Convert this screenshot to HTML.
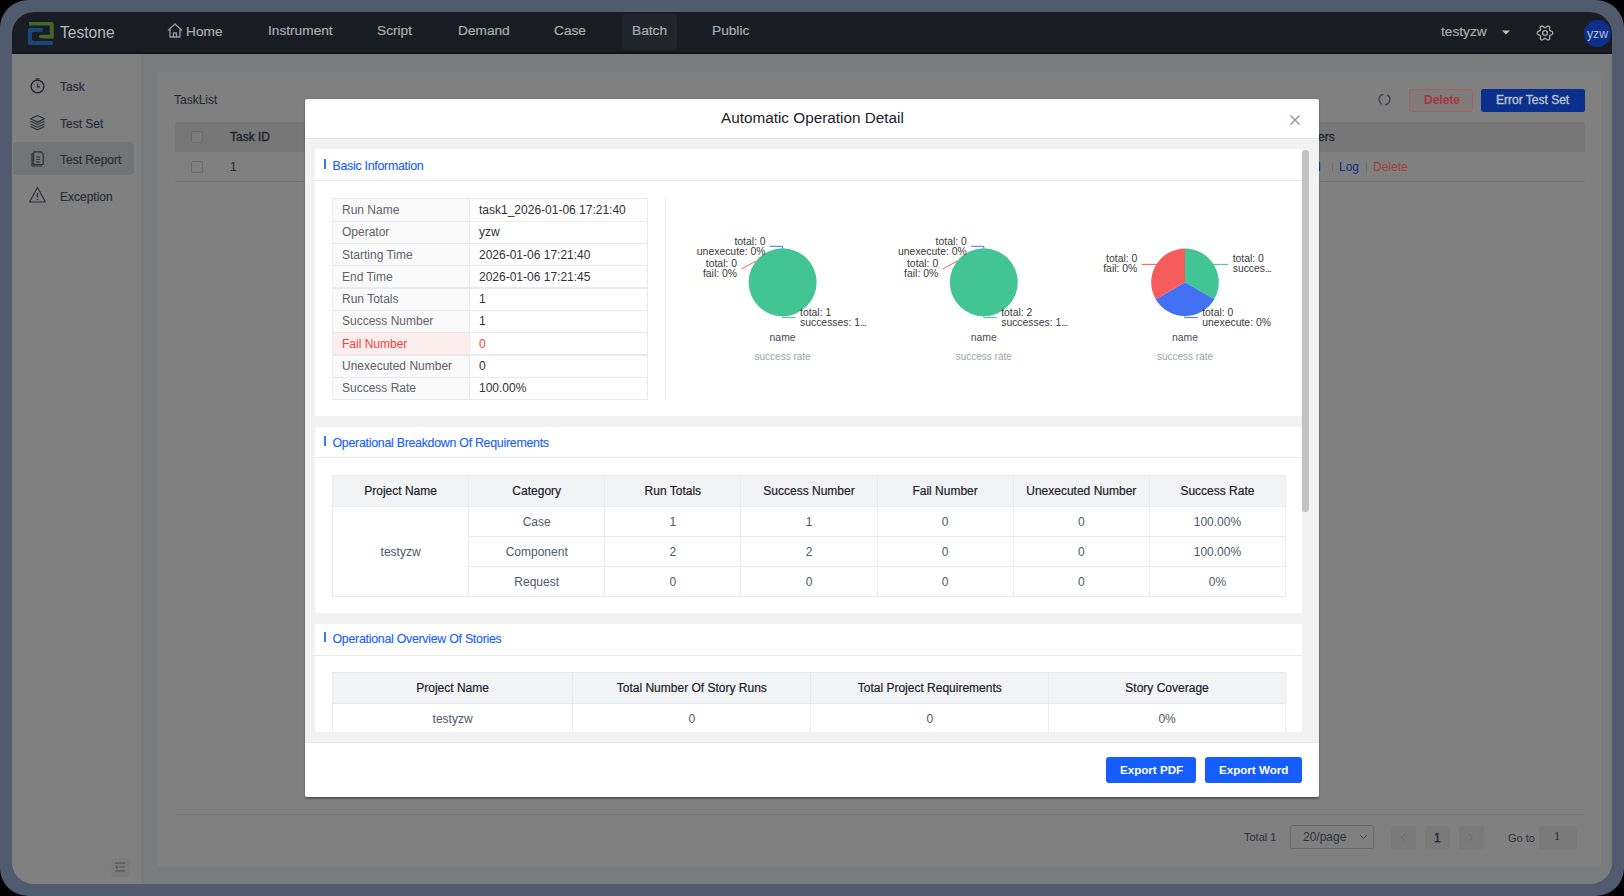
<!DOCTYPE html>
<html><head><meta charset="utf-8">
<style>
*{box-sizing:border-box;margin:0;padding:0}
html,body{width:1624px;height:896px;overflow:hidden;background:#000;font-family:"Liberation Sans",sans-serif}
.a{position:absolute}
#frame{position:absolute;left:0;top:0;width:1624px;height:896px;background:#505c6e;border-radius:28px}
#inner{position:absolute;left:0;top:0;width:1624px;height:896px;clip-path:inset(12px 12px 12px 12px round 22px);background:#7b7b7b}
.t{position:absolute;white-space:nowrap;line-height:1}
</style></head><body>
<div id="frame"></div>
<div id="inner">
  <!-- header -->
  <div class="a" style="left:0;top:0;width:1624px;height:54px;background:#191c23;border-bottom:2px solid #0f1219"></div>
  <!-- logo -->
  <svg class="a" style="left:26px;top:20px" width="30" height="28" viewBox="26 20 30 28">
    <path d="M29 21.9 H51 Q53.8 21.9 53.8 24.7 V38.4 H41.5 Q39 38.4 39 36.6 Q39 34.75 41.5 34.75 H49.8 V25.5 H29 Z" fill="#46652a"/>
    <path d="M42.6 27.9 V31.7 H34.5 Q31.9 31.7 31.9 34 V38.5 Q31.9 41.1 34.5 41.1 H52.8 V45 H30.6 Q27.85 45 27.85 42.2 V30.7 Q27.85 27.9 30.6 27.9 Z" fill="#1b4677"/>
  </svg>
  <div class="t" style="left:60px;top:25px;font-size:15.6px;color:#b7babe">Testone</div>
  <!-- nav -->
  <svg class="a" style="left:166px;top:22px" width="18" height="17" viewBox="0 0 18 17">
    <path d="M2 8.5 L9 2 L16 8.5 M4 7 V15 H14 V7 M7.5 15 V11 H10.5 V15" fill="none" stroke="#999b9f" stroke-width="1.3" stroke-linejoin="round"/>
  </svg>
  <div class="t" style="left:186px;top:25px;font-size:13.7px;color:#a9adb2;-webkit-text-stroke:0.2px #a9adb2">Home</div>
  <div class="t" style="left:268px;top:24px;font-size:13.7px;color:#a9adb2;-webkit-text-stroke:0.2px #a9adb2">Instrument</div>
  <div class="t" style="left:377px;top:24px;font-size:13.7px;color:#a9adb2;-webkit-text-stroke:0.2px #a9adb2">Script</div>
  <div class="t" style="left:458px;top:24px;font-size:13.7px;color:#a9adb2;-webkit-text-stroke:0.2px #a9adb2">Demand</div>
  <div class="t" style="left:554px;top:24px;font-size:13.7px;color:#a9adb2;-webkit-text-stroke:0.2px #a9adb2">Case</div>
  <div class="a" style="left:622px;top:14px;width:55px;height:36px;background:#21242b;border-radius:4px"></div>
  <div class="t" style="left:632px;top:24px;font-size:13.7px;color:#a9adb2;-webkit-text-stroke:0.2px #a9adb2">Batch</div>
  <div class="t" style="left:712px;top:24px;font-size:13.7px;color:#a9adb2;-webkit-text-stroke:0.2px #a9adb2">Public</div>
  <div class="t" style="left:1441px;top:25px;font-size:13.7px;color:#a9adb2;-webkit-text-stroke:0.2px #a9adb2">testyzw</div>
  <svg class="a" style="left:1501px;top:29px" width="10" height="7" viewBox="0 0 10 7"><path d="M1 1.5 H9 L5 5.5 Z" fill="#bdbfc3"/></svg>
  <svg class="a" style="left:1536px;top:24px" width="18" height="18" viewBox="0 0 18 18"><path d="M16.70 9.00 L16.70 9.27 L16.68 9.54 L16.66 9.80 L16.45 10.05 L16.18 10.27 L15.87 10.46 L15.54 10.63 L15.21 10.78 L14.87 10.91 L14.56 11.02 L14.27 11.13 L14.02 11.24 L13.94 11.41 L13.86 11.58 L13.76 11.75 L13.66 11.91 L13.56 12.08 L13.45 12.23 L13.48 12.50 L13.53 12.80 L13.59 13.13 L13.64 13.48 L13.68 13.85 L13.70 14.22 L13.68 14.58 L13.63 14.93 L13.53 15.23 L13.31 15.38 L13.08 15.53 L12.85 15.67 L12.61 15.80 L12.38 15.92 L12.13 16.03 L11.82 15.97 L11.49 15.85 L11.17 15.68 L10.86 15.48 L10.56 15.26 L10.28 15.04 L10.03 14.82 L9.79 14.62 L9.57 14.47 L9.38 14.49 L9.19 14.50 L9.00 14.50 L8.81 14.50 L8.62 14.49 L8.43 14.47 L8.21 14.62 L7.97 14.82 L7.72 15.04 L7.44 15.26 L7.14 15.48 L6.83 15.68 L6.51 15.85 L6.18 15.97 L5.87 16.03 L5.62 15.92 L5.39 15.80 L5.15 15.67 L4.92 15.53 L4.69 15.38 L4.47 15.23 L4.37 14.93 L4.32 14.58 L4.30 14.22 L4.32 13.85 L4.36 13.48 L4.41 13.13 L4.47 12.80 L4.52 12.50 L4.55 12.23 L4.44 12.08 L4.34 11.91 L4.24 11.75 L4.14 11.58 L4.06 11.41 L3.98 11.24 L3.73 11.13 L3.44 11.02 L3.13 10.91 L2.79 10.78 L2.46 10.63 L2.13 10.46 L1.82 10.27 L1.55 10.05 L1.34 9.80 L1.32 9.54 L1.30 9.27 L1.30 9.00 L1.30 8.73 L1.32 8.46 L1.34 8.20 L1.55 7.95 L1.82 7.73 L2.13 7.54 L2.46 7.37 L2.79 7.22 L3.13 7.09 L3.44 6.98 L3.73 6.87 L3.98 6.76 L4.06 6.59 L4.14 6.42 L4.24 6.25 L4.34 6.09 L4.44 5.92 L4.55 5.77 L4.52 5.50 L4.47 5.20 L4.41 4.87 L4.36 4.52 L4.32 4.15 L4.30 3.78 L4.32 3.42 L4.37 3.07 L4.47 2.77 L4.69 2.62 L4.92 2.47 L5.15 2.33 L5.39 2.20 L5.62 2.08 L5.87 1.97 L6.18 2.03 L6.51 2.15 L6.83 2.32 L7.14 2.52 L7.44 2.74 L7.72 2.96 L7.97 3.18 L8.21 3.38 L8.43 3.53 L8.62 3.51 L8.81 3.50 L9.00 3.50 L9.19 3.50 L9.38 3.51 L9.57 3.53 L9.79 3.38 L10.03 3.18 L10.28 2.96 L10.56 2.74 L10.86 2.52 L11.17 2.32 L11.49 2.15 L11.82 2.03 L12.13 1.97 L12.38 2.08 L12.61 2.20 L12.85 2.33 L13.08 2.47 L13.31 2.62 L13.53 2.77 L13.63 3.07 L13.68 3.42 L13.70 3.78 L13.68 4.15 L13.64 4.52 L13.59 4.87 L13.53 5.20 L13.48 5.50 L13.45 5.77 L13.56 5.92 L13.66 6.09 L13.76 6.25 L13.86 6.42 L13.94 6.59 L14.02 6.76 L14.27 6.87 L14.56 6.98 L14.87 7.09 L15.21 7.22 L15.54 7.37 L15.87 7.54 L16.18 7.73 L16.45 7.95 L16.66 8.20 L16.68 8.46 L16.70 8.73Z" fill="none" stroke="#a9adb2" stroke-width="1.3" stroke-linejoin="round"/><circle cx="9" cy="9" r="2.4" fill="none" stroke="#a9adb2" stroke-width="1.3"/></svg>
  <div class="a" style="left:1584px;top:20px;width:27px;height:27px;border-radius:50%;background:#0c2f8a"></div>
  <div class="t" style="left:1577.5px;width:40px;text-align:center;top:27.5px;font-size:12.2px;color:#b9bdd0">yzw</div>

  <!-- sidebar -->
  <div class="a" style="left:0;top:54px;width:141px;height:843px;background:#808080"></div>
  <div class="a" style="left:13px;top:142px;width:121px;height:33px;background:#737476;border-radius:4px"></div>
  <!-- task icon -->
  <svg class="a" style="left:29px;top:77px" width="17" height="17" viewBox="0 0 17 17">
    <circle cx="8.5" cy="9.5" r="6.4" fill="none" stroke="#1f2228" stroke-width="1.3"/>
    <path d="M6.5 1.8 H10.5 M8.5 1.8 V3.5 M8.5 6.5 V9.8 H11" fill="none" stroke="#2e3138" stroke-width="1.2"/>
  </svg>
  <div class="t" style="left:60px;top:81px;font-size:12px;color:#262b35;-webkit-text-stroke:0.15px #262b35">Task</div>
  <!-- layers icon -->
  <svg class="a" style="left:29px;top:114px" width="17" height="17" viewBox="0 0 17 17">
    <path d="M8.5 1.5 L15.5 4.8 L8.5 8.1 L1.5 4.8 Z" fill="none" stroke="#2e3138" stroke-width="1.2" stroke-linejoin="round"/>
    <path d="M1.5 7.3 L8.5 10.6 L15.5 7.3 M1.5 9.9 L8.5 13.2 L15.5 9.9 M1.5 12.5 L8.5 15.8 L15.5 12.5" fill="none" stroke="#2e3138" stroke-width="1.1" stroke-linejoin="round"/>
  </svg>
  <div class="t" style="left:60px;top:118px;font-size:12px;color:#262b35;-webkit-text-stroke:0.15px #262b35">Test Set</div>
  <!-- report icon -->
  <svg class="a" style="left:29px;top:150px" width="17" height="17" viewBox="0 0 17 17">
    <path d="M3 3.5 H4.5 V1.8 H12 L14.2 4 V14.5 H12.5 V16 H3 Z M4.5 3.5 V14.5 H12.5" fill="none" stroke="#2e3138" stroke-width="1.2" stroke-linejoin="round"/>
    <path d="M7 7 H11 M7 9.5 H11 M7 12 H11" stroke="#2e3138" stroke-width="1.2"/>
  </svg>
  <div class="t" style="left:60px;top:154px;font-size:12px;color:#262b35;-webkit-text-stroke:0.15px #262b35">Test Report</div>
  <!-- warning icon -->
  <svg class="a" style="left:28px;top:186px" width="19" height="18" viewBox="0 0 19 18">
    <path d="M9.5 1.5 L17.5 16 H1.5 Z" fill="none" stroke="#2e3138" stroke-width="1.2" stroke-linejoin="round"/>
    <path d="M9.5 7 V11.5" stroke="#2e3138" stroke-width="1.3"/>
    <circle cx="9.5" cy="13.5" r="0.8" fill="#2e3138"/>
  </svg>
  <div class="t" style="left:60px;top:191px;font-size:12px;color:#262b35;-webkit-text-stroke:0.15px #262b35">Exception</div>
  <!-- collapse icon -->
  <div class="a" style="left:111px;top:858px;width:19px;height:19px;background:#7c7c7c;border-radius:2px"></div>
  <svg class="a" style="left:114px;top:861px" width="12" height="12" viewBox="0 0 12 12">
    <path d="M1 2.2 H11 M5 6 H11 M1 9.9 H11" stroke="#555" stroke-width="1.2"/>
    <path d="M1 6 L3.5 4 V8 Z" fill="#555"/>
  </svg>

  <!-- content bg -->
  <div class="a" style="left:141px;top:54px;width:1483px;height:843px;background:#7a7b7d"></div>
  <div class="a" style="left:157px;top:72px;width:1444px;height:795px;background:#808080;border-radius:2px"></div>
  <div class="t" style="left:174px;top:94px;font-size:12px;color:#1f232b">TaskList</div>
  <!-- refresh icon -->
  <svg class="a" style="left:1378px;top:93px" width="13" height="13" viewBox="0 0 13 13"><path d="M5.01 1.31 A5.4 5.4 0 0 0 3.18 10.76 M9.67 2.13 A5.4 5.4 0 0 1 7.62 11.78" fill="none" stroke="#3a3d44" stroke-width="1.3" stroke-linecap="round"/></svg>
  <div class="a" style="left:1409px;top:88.5px;width:64px;height:23.5px;border:1px solid #a06262;border-radius:3px;background:#827b7b"></div>
  <div class="t" style="left:1424px;top:94px;font-size:12px;font-weight:bold;color:#a6383e">Delete</div>
  <div class="a" style="left:1481px;top:89px;width:104px;height:23px;background:#0b2f8c;border-radius:2px"></div>
  <div class="t" style="left:1496px;top:94px;font-size:12px;color:#bfc3cc;-webkit-text-stroke:0.35px #bfc3cc">Error Test Set</div>
  <!-- table header -->
  <div class="a" style="left:175px;top:122px;width:1410px;height:30px;background:#777777"></div>
  <div class="a" style="left:191px;top:131px;width:12px;height:12px;border:1px solid #6c6c6c;border-radius:2px;background:#7c7c7c"></div>
  <div class="t" style="left:230px;top:131px;font-size:12px;color:#1f232b;-webkit-text-stroke:0.35px #1f232b">Task ID</div>
  <div class="t" style="left:1318px;top:131px;font-size:12px;color:#1f232b;-webkit-text-stroke:0.35px #1f232b">ers</div>
  <div class="a" style="left:191px;top:161px;width:12px;height:12px;border:1px solid #6c6c6c;border-radius:2px;background:#808080"></div>
  <div class="t" style="left:230px;top:161px;font-size:12px;color:#26292f">1</div>
  <div class="t" style="left:1290px;top:161px;font-size:12px;color:#0a2c80">Detail</div>
  <div class="a" style="left:1332px;top:162px;width:1px;height:10px;background:#6e6e6e"></div>
  <div class="t" style="left:1339px;top:161px;font-size:12px;color:#0a2c80">Log</div>
  <div class="a" style="left:1366px;top:162px;width:1px;height:10px;background:#6e6e6e"></div>
  <div class="t" style="left:1373px;top:161px;font-size:12px;color:#a03f3f">Delete</div>
  <div class="a" style="left:175px;top:181px;width:1410px;height:1px;background:#737373"></div>
  <!-- pagination -->
  <div class="a" style="left:175px;top:814px;width:1410px;height:1px;background:#767676"></div>
  <div class="t" style="left:1244px;top:832px;font-size:11px;color:#2e3138">Total 1</div>
  <div class="a" style="left:1290px;top:825px;width:84px;height:24px;border:1px solid #6a6a6a;border-radius:2px"></div>
  <div class="t" style="left:1303px;top:831px;font-size:12px;color:#2e3138">20/page</div>
  <svg class="a" style="left:1359px;top:834px" width="9" height="6" viewBox="0 0 9 6"><path d="M1 1 L4.5 4.5 L8 1" fill="none" stroke="#444" stroke-width="1"/></svg>
  <div class="a" style="left:1391px;top:826px;width:25px;height:23px;background:#7a7a7a;border-radius:2px"></div>
  <svg class="a" style="left:1400px;top:833px" width="6" height="9" viewBox="0 0 6 9"><path d="M5 1 L1.5 4.5 L5 8" fill="none" stroke="#6a6a6a" stroke-width="1"/></svg>
  <div class="a" style="left:1425px;top:826px;width:25px;height:23px;background:#7a7a7a;border-radius:2px"></div>
  <div class="t" style="left:1434px;top:832px;font-size:12px;color:#1f232b;-webkit-text-stroke:0.3px #1f232b">1</div>
  <div class="a" style="left:1459px;top:826px;width:25px;height:23px;background:#7a7a7a;border-radius:2px"></div>
  <svg class="a" style="left:1468px;top:833px" width="6" height="9" viewBox="0 0 6 9"><path d="M1 1 L4.5 4.5 L1 8" fill="none" stroke="#6a6a6a" stroke-width="1"/></svg>
  <div class="t" style="left:1508px;top:833px;font-size:11px;color:#2e3138">Go to</div>
  <div class="a" style="left:1539px;top:826px;width:38px;height:23px;background:#7a7a7a;border-radius:2px"></div>
  <div class="t" style="left:1554px;top:830px;font-size:12px;color:#1f232b;font-family:'Liberation Serif'">1</div>

</div>
<div id="modal">
<div class="a" style="left:305px;top:99px;width:1014px;height:698px;background:#fff;border-radius:2px;box-shadow:0 1.5px 1.5px rgba(0,0,0,.3),0 0 1.5px rgba(0,0,0,.2)"></div>
<div class="t" style="left:721px;top:110px;font-size:15.3px;color:#1d2129">Automatic Operation Detail</div>
<svg class="a" style="left:1289px;top:114px" width="12" height="12" viewBox="0 0 12 12"><path d="M1.5 1.5 L10.5 10.5 M10.5 1.5 L1.5 10.5" stroke="#86909c" stroke-width="1.2"/></svg>
<div class="a" style="left:305px;top:138px;width:1014px;height:605px;background:#f2f2f3;border-top:1px solid #e5e6eb;border-bottom:1px solid #e5e6eb"></div>
<div class="a" style="left:1106px;top:757px;width:90px;height:26px;background:#165dff;border-radius:3px"></div>
<div class="t" style="left:1120px;top:764px;font-size:11.6px;font-weight:bold;color:#fff">Export PDF</div>
<div class="a" style="left:1205px;top:757px;width:97px;height:26px;background:#165dff;border-radius:3px"></div>
<div class="t" style="left:1219px;top:764px;font-size:11.6px;font-weight:bold;color:#fff">Export Word</div>
<div class="a" style="left:315px;top:149px;width:994px;height:583px;overflow:hidden">
<div class="a" style="left:0.00px;top:0.00px;width:987.00px;height:267.00px;background:#fff"></div>
<div class="a" style="left:0.00px;top:31.00px;width:987.00px;height:1.00px;background:#e8eaef"></div>
<div class="a" style="left:9.00px;top:9.90px;width:1.60px;height:10.30px;background:#3c78ff"></div>
<div class="t" style="left:17.50px;top:11.20px;font-size:12.4px;color:#165dff;letter-spacing:-0.28px;-webkit-text-stroke:0.1px #165dff">Basic Information</div>
<div class="a" style="left:17.00px;top:49.00px;width:316.00px;height:202.00px;background:#e8eaef"></div>
<div class="a" style="left:18.00px;top:50.10px;width:136.00px;height:21.60px;background:#fafafa"></div>
<div class="a" style="left:155.00px;top:50.10px;width:177.00px;height:21.60px;background:#fff"></div>
<div class="t" style="left:27.00px;top:54.90px;font-size:12px;color:#606266;">Run Name</div>
<div class="t" style="left:164.00px;top:54.90px;font-size:12px;color:#303133;">task1_2026-01-06 17:21:40</div>
<div class="a" style="left:18.00px;top:72.70px;width:136.00px;height:21.10px;background:#fafafa"></div>
<div class="a" style="left:155.00px;top:72.70px;width:177.00px;height:21.10px;background:#fff"></div>
<div class="t" style="left:27.00px;top:77.25px;font-size:12px;color:#606266;">Operator</div>
<div class="t" style="left:164.00px;top:77.25px;font-size:12px;color:#303133;">yzw</div>
<div class="a" style="left:18.00px;top:94.80px;width:136.00px;height:21.60px;background:#fafafa"></div>
<div class="a" style="left:155.00px;top:94.80px;width:177.00px;height:21.60px;background:#fff"></div>
<div class="t" style="left:27.00px;top:99.60px;font-size:12px;color:#606266;">Starting Time</div>
<div class="t" style="left:164.00px;top:99.60px;font-size:12px;color:#303133;">2026-01-06 17:21:40</div>
<div class="a" style="left:18.00px;top:117.40px;width:136.00px;height:21.10px;background:#fafafa"></div>
<div class="a" style="left:155.00px;top:117.40px;width:177.00px;height:21.10px;background:#fff"></div>
<div class="t" style="left:27.00px;top:121.95px;font-size:12px;color:#606266;">End Time</div>
<div class="t" style="left:164.00px;top:121.95px;font-size:12px;color:#303133;">2026-01-06 17:21:45</div>
<div class="a" style="left:18.00px;top:139.50px;width:136.00px;height:21.10px;background:#fafafa"></div>
<div class="a" style="left:155.00px;top:139.50px;width:177.00px;height:21.10px;background:#fff"></div>
<div class="t" style="left:27.00px;top:144.05px;font-size:12px;color:#606266;">Run Totals</div>
<div class="t" style="left:164.00px;top:144.05px;font-size:12px;color:#303133;">1</div>
<div class="a" style="left:18.00px;top:161.60px;width:136.00px;height:21.30px;background:#fafafa"></div>
<div class="a" style="left:155.00px;top:161.60px;width:177.00px;height:21.30px;background:#fff"></div>
<div class="t" style="left:27.00px;top:166.25px;font-size:12px;color:#606266;">Success Number</div>
<div class="t" style="left:164.00px;top:166.25px;font-size:12px;color:#303133;">1</div>
<div class="a" style="left:18.00px;top:183.90px;width:136.00px;height:21.60px;background:#fdeeee"></div>
<div class="a" style="left:155.00px;top:183.90px;width:177.00px;height:21.60px;background:#fff"></div>
<div class="t" style="left:27.00px;top:188.70px;font-size:12px;color:#f53f3f;">Fail Number</div>
<div class="t" style="left:164.00px;top:188.70px;font-size:12px;color:#f53f3f;">0</div>
<div class="a" style="left:18.00px;top:206.50px;width:136.00px;height:21.10px;background:#fafafa"></div>
<div class="a" style="left:155.00px;top:206.50px;width:177.00px;height:21.10px;background:#fff"></div>
<div class="t" style="left:27.00px;top:211.05px;font-size:12px;color:#606266;">Unexecuted Number</div>
<div class="t" style="left:164.00px;top:211.05px;font-size:12px;color:#303133;">0</div>
<div class="a" style="left:18.00px;top:228.60px;width:136.00px;height:21.60px;background:#fafafa"></div>
<div class="a" style="left:155.00px;top:228.60px;width:177.00px;height:21.60px;background:#fff"></div>
<div class="t" style="left:27.00px;top:233.40px;font-size:12px;color:#606266;">Success Rate</div>
<div class="t" style="left:164.00px;top:233.40px;font-size:12px;color:#303133;">100.00%</div>
<div class="a" style="left:350.00px;top:49.00px;width:1.00px;height:202.00px;background:#e8eaef"></div>
<svg class="a" style="left:0;top:0" width="994" height="583"><circle cx="467.6" cy="133.3" r="34" fill="#43c494"/><polyline points="454.90,97.30 467.60,97.30 467.60,99.50" fill="none" stroke="#4271f3" stroke-width="1"/><polyline points="426.60,119.90 441.20,112.00" fill="none" stroke="#f85b5c" stroke-width="1"/><polyline points="467.60,167.20 467.60,168.60 480.50,168.60" fill="none" stroke="#43c494" stroke-width="1"/><circle cx="668.8" cy="133.3" r="34" fill="#43c494"/><polyline points="656.10,97.30 668.80,97.30 668.80,99.50" fill="none" stroke="#4271f3" stroke-width="1"/><polyline points="627.80,119.90 642.40,112.00" fill="none" stroke="#f85b5c" stroke-width="1"/><polyline points="668.80,167.20 668.80,168.60 681.70,168.60" fill="none" stroke="#43c494" stroke-width="1"/><path d="M870 133.3 L870.00 99.50 A33.8 33.8 0 0 1 899.27 150.20 Z" fill="#43c494"/><path d="M870 133.3 L899.27 150.20 A33.8 33.8 0 0 1 840.73 150.20 Z" fill="#4271f3"/><path d="M870 133.3 L840.73 150.20 A33.8 33.8 0 0 1 870.00 99.50 Z" fill="#f85b5c"/><polyline points="826.60,115.40 841.20,115.40 844.00,117.50" fill="none" stroke="#f85b5c" stroke-width="1"/><polyline points="895.50,117.00 898.90,115.40 913.20,115.40" fill="none" stroke="#43c494" stroke-width="1"/><polyline points="869.60,167.50 869.60,168.60 883.00,168.60" fill="none" stroke="#4271f3" stroke-width="1"/></svg>
<div class="t" style="left:150.60px;width:300px;text-align:right;top:87.70px;font-size:10.4px;color:#3a3a3a;">total: 0</div>
<div class="t" style="left:150.60px;width:300px;text-align:right;top:97.80px;font-size:10.4px;color:#3a3a3a;">unexecute: 0%</div>
<div class="t" style="left:122.00px;width:300px;text-align:right;top:110.00px;font-size:10.4px;color:#3a3a3a;">total: 0</div>
<div class="t" style="left:122.00px;width:300px;text-align:right;top:120.00px;font-size:10.4px;color:#3a3a3a;">fail: 0%</div>
<div class="t" style="left:485.00px;top:158.50px;font-size:10.4px;color:#3a3a3a;">total: 1</div>
<div class="t" style="left:485.00px;top:168.90px;font-size:10.4px;color:#3a3a3a;">successes: 1<span style="letter-spacing:-0.9px">...</span></div>
<div class="t" style="left:167.60px;width:600px;text-align:center;top:184.30px;font-size:10.4px;color:#464c58;">name</div>
<div class="t" style="left:167.60px;width:600px;text-align:center;top:202.90px;font-size:10px;color:#9ca3af;">success rate</div>
<div class="t" style="left:351.80px;width:300px;text-align:right;top:87.70px;font-size:10.4px;color:#3a3a3a;">total: 0</div>
<div class="t" style="left:351.80px;width:300px;text-align:right;top:97.80px;font-size:10.4px;color:#3a3a3a;">unexecute: 0%</div>
<div class="t" style="left:323.20px;width:300px;text-align:right;top:110.00px;font-size:10.4px;color:#3a3a3a;">total: 0</div>
<div class="t" style="left:323.20px;width:300px;text-align:right;top:120.00px;font-size:10.4px;color:#3a3a3a;">fail: 0%</div>
<div class="t" style="left:686.20px;top:158.50px;font-size:10.4px;color:#3a3a3a;">total: 2</div>
<div class="t" style="left:686.20px;top:168.90px;font-size:10.4px;color:#3a3a3a;">successes: 1<span style="letter-spacing:-0.9px">...</span></div>
<div class="t" style="left:368.80px;width:600px;text-align:center;top:184.30px;font-size:10.4px;color:#464c58;">name</div>
<div class="t" style="left:368.80px;width:600px;text-align:center;top:202.90px;font-size:10px;color:#9ca3af;">success rate</div>
<div class="t" style="left:522.30px;width:300px;text-align:right;top:105.30px;font-size:10.4px;color:#3a3a3a;">total: 0</div>
<div class="t" style="left:522.30px;width:300px;text-align:right;top:115.40px;font-size:10.4px;color:#3a3a3a;">fail: 0%</div>
<div class="t" style="left:917.70px;top:105.30px;font-size:10.4px;color:#3a3a3a;">total: 0</div>
<div class="t" style="left:917.70px;top:115.40px;font-size:10.4px;color:#3a3a3a;">succes<span style="letter-spacing:-0.9px">...</span></div>
<div class="t" style="left:887.20px;top:158.50px;font-size:10.4px;color:#3a3a3a;">total: 0</div>
<div class="t" style="left:887.20px;top:168.80px;font-size:10.4px;color:#3a3a3a;">unexecute: 0%</div>
<div class="t" style="left:570.00px;width:600px;text-align:center;top:184.30px;font-size:10.4px;color:#464c58;">name</div>
<div class="t" style="left:570.00px;width:600px;text-align:center;top:202.90px;font-size:10px;color:#9ca3af;">success rate</div>
<div class="a" style="left:0.00px;top:277.80px;width:987.00px;height:186.60px;background:#fff"></div>
<div class="a" style="left:0.00px;top:308.30px;width:987.00px;height:1.00px;background:#e8eaef"></div>
<div class="a" style="left:9.00px;top:287.00px;width:1.60px;height:10.30px;background:#3c78ff"></div>
<div class="t" style="left:17.50px;top:288.30px;font-size:12.4px;color:#165dff;letter-spacing:-0.28px;-webkit-text-stroke:0.1px #165dff">Operational Breakdown Of Requirements</div>
<div class="a" style="left:17.00px;top:326.10px;width:953.50px;height:121.70px;background:#e8eaef"></div>
<div class="a" style="left:18.00px;top:327.10px;width:135.14px;height:30.10px;background:#f2f3f5"></div>
<div class="t" style="left:-214.43px;width:600px;text-align:center;top:336.45px;font-size:12px;color:#1d2129;-webkit-text-stroke:0.2px #1d2129">Project Name</div>
<div class="a" style="left:154.14px;top:327.10px;width:135.14px;height:30.10px;background:#f2f3f5"></div>
<div class="t" style="left:-78.29px;width:600px;text-align:center;top:336.45px;font-size:12px;color:#1d2129;-webkit-text-stroke:0.2px #1d2129">Category</div>
<div class="a" style="left:290.29px;top:327.10px;width:135.14px;height:30.10px;background:#f2f3f5"></div>
<div class="t" style="left:57.86px;width:600px;text-align:center;top:336.45px;font-size:12px;color:#1d2129;-webkit-text-stroke:0.2px #1d2129">Run Totals</div>
<div class="a" style="left:426.43px;top:327.10px;width:135.14px;height:30.10px;background:#f2f3f5"></div>
<div class="t" style="left:194.00px;width:600px;text-align:center;top:336.45px;font-size:12px;color:#1d2129;-webkit-text-stroke:0.2px #1d2129">Success Number</div>
<div class="a" style="left:562.57px;top:327.10px;width:135.14px;height:30.10px;background:#f2f3f5"></div>
<div class="t" style="left:330.14px;width:600px;text-align:center;top:336.45px;font-size:12px;color:#1d2129;-webkit-text-stroke:0.2px #1d2129">Fail Number</div>
<div class="a" style="left:698.71px;top:327.10px;width:135.14px;height:30.10px;background:#f2f3f5"></div>
<div class="t" style="left:466.29px;width:600px;text-align:center;top:336.45px;font-size:12px;color:#1d2129;-webkit-text-stroke:0.2px #1d2129">Unexecuted Number</div>
<div class="a" style="left:834.86px;top:327.10px;width:135.14px;height:30.10px;background:#f2f3f5"></div>
<div class="t" style="left:602.43px;width:600px;text-align:center;top:336.45px;font-size:12px;color:#1d2129;-webkit-text-stroke:0.2px #1d2129">Success Rate</div>
<div class="a" style="left:18.00px;top:358.20px;width:135.14px;height:88.60px;background:#fff"></div>
<div class="t" style="left:-214.43px;width:600px;text-align:center;top:396.50px;font-size:12px;color:#4e5969;">testyzw</div>
<div class="a" style="left:154.14px;top:358.20px;width:135.14px;height:29.00px;background:#fff"></div>
<div class="t" style="left:-78.29px;width:600px;text-align:center;top:367.00px;font-size:12px;color:#4e5969;">Case</div>
<div class="a" style="left:290.29px;top:358.20px;width:135.14px;height:29.00px;background:#fff"></div>
<div class="t" style="left:57.86px;width:600px;text-align:center;top:367.00px;font-size:12px;color:#4e5969;">1</div>
<div class="a" style="left:426.43px;top:358.20px;width:135.14px;height:29.00px;background:#fff"></div>
<div class="t" style="left:194.00px;width:600px;text-align:center;top:367.00px;font-size:12px;color:#4e5969;">1</div>
<div class="a" style="left:562.57px;top:358.20px;width:135.14px;height:29.00px;background:#fff"></div>
<div class="t" style="left:330.14px;width:600px;text-align:center;top:367.00px;font-size:12px;color:#4e5969;">0</div>
<div class="a" style="left:698.71px;top:358.20px;width:135.14px;height:29.00px;background:#fff"></div>
<div class="t" style="left:466.29px;width:600px;text-align:center;top:367.00px;font-size:12px;color:#4e5969;">0</div>
<div class="a" style="left:834.86px;top:358.20px;width:135.14px;height:29.00px;background:#fff"></div>
<div class="t" style="left:602.43px;width:600px;text-align:center;top:367.00px;font-size:12px;color:#4e5969;">100.00%</div>
<div class="a" style="left:154.14px;top:388.20px;width:135.14px;height:28.70px;background:#fff"></div>
<div class="t" style="left:-78.29px;width:600px;text-align:center;top:396.85px;font-size:12px;color:#4e5969;">Component</div>
<div class="a" style="left:290.29px;top:388.20px;width:135.14px;height:28.70px;background:#fff"></div>
<div class="t" style="left:57.86px;width:600px;text-align:center;top:396.85px;font-size:12px;color:#4e5969;">2</div>
<div class="a" style="left:426.43px;top:388.20px;width:135.14px;height:28.70px;background:#fff"></div>
<div class="t" style="left:194.00px;width:600px;text-align:center;top:396.85px;font-size:12px;color:#4e5969;">2</div>
<div class="a" style="left:562.57px;top:388.20px;width:135.14px;height:28.70px;background:#fff"></div>
<div class="t" style="left:330.14px;width:600px;text-align:center;top:396.85px;font-size:12px;color:#4e5969;">0</div>
<div class="a" style="left:698.71px;top:388.20px;width:135.14px;height:28.70px;background:#fff"></div>
<div class="t" style="left:466.29px;width:600px;text-align:center;top:396.85px;font-size:12px;color:#4e5969;">0</div>
<div class="a" style="left:834.86px;top:388.20px;width:135.14px;height:28.70px;background:#fff"></div>
<div class="t" style="left:602.43px;width:600px;text-align:center;top:396.85px;font-size:12px;color:#4e5969;">100.00%</div>
<div class="a" style="left:154.14px;top:417.90px;width:135.14px;height:28.90px;background:#fff"></div>
<div class="t" style="left:-78.29px;width:600px;text-align:center;top:426.65px;font-size:12px;color:#4e5969;">Request</div>
<div class="a" style="left:290.29px;top:417.90px;width:135.14px;height:28.90px;background:#fff"></div>
<div class="t" style="left:57.86px;width:600px;text-align:center;top:426.65px;font-size:12px;color:#4e5969;">0</div>
<div class="a" style="left:426.43px;top:417.90px;width:135.14px;height:28.90px;background:#fff"></div>
<div class="t" style="left:194.00px;width:600px;text-align:center;top:426.65px;font-size:12px;color:#4e5969;">0</div>
<div class="a" style="left:562.57px;top:417.90px;width:135.14px;height:28.90px;background:#fff"></div>
<div class="t" style="left:330.14px;width:600px;text-align:center;top:426.65px;font-size:12px;color:#4e5969;">0</div>
<div class="a" style="left:698.71px;top:417.90px;width:135.14px;height:28.90px;background:#fff"></div>
<div class="t" style="left:466.29px;width:600px;text-align:center;top:426.65px;font-size:12px;color:#4e5969;">0</div>
<div class="a" style="left:834.86px;top:417.90px;width:135.14px;height:28.90px;background:#fff"></div>
<div class="t" style="left:602.43px;width:600px;text-align:center;top:426.65px;font-size:12px;color:#4e5969;">0%</div>
<div class="a" style="left:0.00px;top:474.90px;width:987.00px;height:136.10px;background:#fff"></div>
<div class="a" style="left:0.00px;top:505.60px;width:987.00px;height:1.00px;background:#e8eaef"></div>
<div class="a" style="left:9.00px;top:483.00px;width:1.60px;height:10.30px;background:#3c78ff"></div>
<div class="t" style="left:17.50px;top:484.30px;font-size:12.4px;color:#165dff;letter-spacing:-0.28px;-webkit-text-stroke:0.1px #165dff">Operational Overview Of Stories</div>
<div class="a" style="left:17.00px;top:523.20px;width:953.50px;height:87.80px;background:#e8eaef"></div>
<div class="a" style="left:18.00px;top:524.20px;width:239.20px;height:29.80px;background:#f2f3f5"></div>
<div class="t" style="left:-162.40px;width:600px;text-align:center;top:533.40px;font-size:12px;color:#1d2129;-webkit-text-stroke:0.2px #1d2129">Project Name</div>
<div class="a" style="left:18.00px;top:555.00px;width:239.20px;height:29.50px;background:#fff"></div>
<div class="t" style="left:-162.40px;width:600px;text-align:center;top:563.55px;font-size:12px;color:#4e5969;">testyzw</div>
<div class="a" style="left:18.00px;top:585.50px;width:239.20px;height:25.50px;background:#fff"></div>
<div class="a" style="left:258.20px;top:524.20px;width:237.20px;height:29.80px;background:#f2f3f5"></div>
<div class="t" style="left:76.80px;width:600px;text-align:center;top:533.40px;font-size:12px;color:#1d2129;-webkit-text-stroke:0.2px #1d2129">Total Number Of Story Runs</div>
<div class="a" style="left:258.20px;top:555.00px;width:237.20px;height:29.50px;background:#fff"></div>
<div class="t" style="left:76.80px;width:600px;text-align:center;top:563.55px;font-size:12px;color:#4e5969;">0</div>
<div class="a" style="left:258.20px;top:585.50px;width:237.20px;height:25.50px;background:#fff"></div>
<div class="a" style="left:496.40px;top:524.20px;width:236.70px;height:29.80px;background:#f2f3f5"></div>
<div class="t" style="left:314.75px;width:600px;text-align:center;top:533.40px;font-size:12px;color:#1d2129;-webkit-text-stroke:0.2px #1d2129">Total Project Requirements</div>
<div class="a" style="left:496.40px;top:555.00px;width:236.70px;height:29.50px;background:#fff"></div>
<div class="t" style="left:314.75px;width:600px;text-align:center;top:563.55px;font-size:12px;color:#4e5969;">0</div>
<div class="a" style="left:496.40px;top:585.50px;width:236.70px;height:25.50px;background:#fff"></div>
<div class="a" style="left:734.10px;top:524.20px;width:235.90px;height:29.80px;background:#f2f3f5"></div>
<div class="t" style="left:552.05px;width:600px;text-align:center;top:533.40px;font-size:12px;color:#1d2129;-webkit-text-stroke:0.2px #1d2129">Story Coverage</div>
<div class="a" style="left:734.10px;top:555.00px;width:235.90px;height:29.50px;background:#fff"></div>
<div class="t" style="left:552.05px;width:600px;text-align:center;top:563.55px;font-size:12px;color:#4e5969;">0%</div>
<div class="a" style="left:734.10px;top:585.50px;width:235.90px;height:25.50px;background:#fff"></div>
<div class="a" style="left:987.00px;top:0.60px;width:7.00px;height:362.40px;background:#c1c1c1;border-radius:3.5px"></div>
</div>
</div>
</body></html>
